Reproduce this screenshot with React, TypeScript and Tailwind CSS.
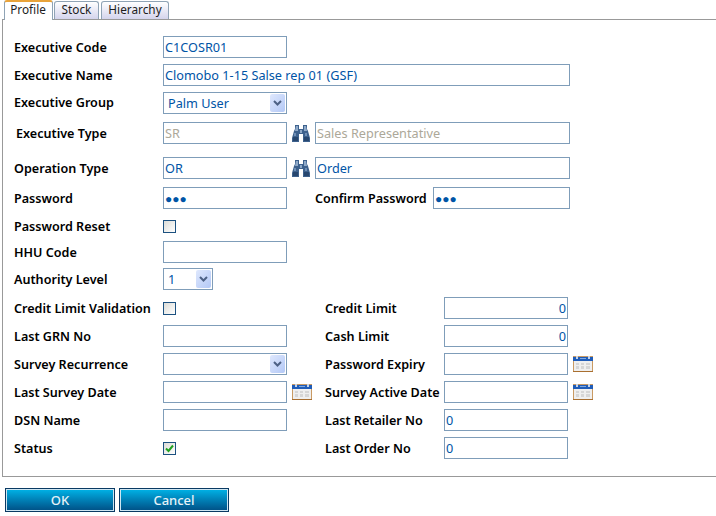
import type { ReactNode } from 'react'

const labelClass = 'pt-[2px] text-[12.6px] font-semibold text-black whitespace-nowrap'
const boxClass = 'h-[22px] border border-[#7f9db9] bg-white px-[1px] text-[12.7px] text-[#0054a6] outline-none'

function Binoculars() {
  return (
    <svg width="18" height="17" viewBox="0 0 18 17" className="shrink-0">
      <path d="M3 0h4v4h4V0h4v4l1 2 2 7v4h-7V9H7v8H0v-4l2-7 1-2z" fill="#3d618d" />
      <path d="M4 1h2v5H3zM12 1h2l1 5h-3zM8 5h2v3H8z" fill="#8fa9c8" />
      <path d="M1 12h5v4H1zM12 12h5v4h-5z" fill="#27476f" />
      <path d="M2 8h2v3H2zM13 8h2v3h-2z" fill="#6f8fb6" />
    </svg>
  )
}

function CalendarIcon() {
  return (
    <svg width="20" height="16" viewBox="0 0 20 16" className="shrink-0">
      <rect x="0" y="0" width="20" height="16" fill="#c99a63" />
      <rect x="0" y="15" width="20" height="1" fill="#a96f30" />
      <rect x="1" y="5" width="18" height="10" fill="#efefef" />
      <rect x="0" y="1" width="20" height="4" fill="#1f5cb8" />
      <rect x="7" y="2" width="6" height="1" fill="#7fa8e0" />
      <rect x="3" y="0" width="2" height="3" fill="#c8d4e6" />
      <rect x="15" y="0" width="2" height="3" fill="#c8d4e6" />
      <path d="M3 7h3v2H3zM8 7h3v2H8zM13 7h4v2h-4zM3 10h3v3H3zM8 10h3v3H8zM13 10h4v3h-4z" fill="#d6d6d6" />
    </svg>
  )
}

function Input({ value = '', className = 'w-[124px]', right = false, muted = false }: {
  value?: string; className?: string; right?: boolean; muted?: boolean
}) {
  return (
    <input readOnly type="text" value={value}
      className={`${boxClass} ${className} ${right ? 'text-right' : ''} ${muted ? 'text-[#aca899]' : ''}`} />
  )
}

// drawn as dots so they come out the size of the original's
function Password({ className }: { className: string }) {
  return <input readOnly type="text" value="●●●" className={`${boxClass} ${className} !text-[12px]`} />
}

function Select({ value = '', className }: { value?: string; className: string }) {
  return (
    <div className={`${boxClass} ${className} flex items-center justify-between pl-[4px] pr-[1px]`}>
      <span className="pt-[2px]">{value}</span>
      <span className="flex h-[18px] w-[15px] items-center justify-center rounded-[2px] bg-gradient-to-br from-[#dfe8fd] to-[#b3c8f6]">
        <svg width="9" height="6" viewBox="0 0 9 6"><path d="M1 1l3.5 3.5L8 1" fill="none" stroke="#4d6185" strokeWidth="2" /></svg>
      </span>
    </div>
  )
}

function Check({ checked = false }: { checked?: boolean }) {
  return (
    <span className="flex h-[13px] w-[13px] items-center justify-center border border-[#1c5180] bg-gradient-to-br from-[#dcdcd7] to-white">
      {checked && <svg width="9" height="9" viewBox="0 0 9 9"><path d="M1 4.5l2.5 2.5L8 1.5" fill="none" stroke="#21a121" strokeWidth="2" /></svg>}
    </span>
  )
}

function Row({ height, label, children, width = 'w-[149px]' }: { height: string; label: string; children?: ReactNode; width?: string }) {
  return (
    <div className={`flex items-center ${height}`}>
      <div className={`${labelClass} ${width}`}>{label}</div>
      {children}
    </div>
  )
}

// lower half of the form: two columns
function Pair({ label, left, rightLabel, right }: { label: string; left: ReactNode; rightLabel: string; right: ReactNode }) {
  return (
    <div className="flex h-[28px] items-center">
      <div className={`${labelClass} w-[149px]`}>{label}</div>
      <div className="flex w-[162px] items-center gap-[5px]">{left}</div>
      <div className={`${labelClass} w-[119px]`}>{rightLabel}</div>
      <div className="flex items-center gap-[5px]">{right}</div>
    </div>
  )
}

export default function App() {
  return (
    <div className="h-[516px] w-[716px] overflow-hidden bg-white font-['Noto_Sans',sans-serif]">
      <div className="relative z-10 flex h-[19px] items-end gap-[1px] pl-[4px] text-[11.8px] text-[#1d1d1d]">
        <div className="-mb-[1px] flex h-[20px] w-[49px] items-center justify-center rounded-t-[3px] border-x border-[#8fa3b5] border-t-2 border-t-[#e8a33a] bg-white pb-[2px] pr-[1px]">Profile</div>
        <div className="flex h-[18px] w-[45px] items-center justify-center rounded-t-[3px] border border-b-0 border-[#8fa3b5] bg-gradient-to-b from-white to-[#d4d4ec] pb-[1px]">Stock</div>
        <div className="ml-[1px] flex h-[18px] w-[68px] items-center justify-center rounded-t-[3px] border border-b-0 border-[#8fa3b5] bg-gradient-to-b from-white to-[#d4d4ec] pb-[1px]">Hierarchy</div>
      </div>
      <div className="ml-[2px] h-[458px] border border-r-0 border-[#999] pl-[11px] pt-[13px]">
        <Row height="h-[28px]" label="Executive Code"><Input value="C1COSR01" /></Row>
        <Row height="h-[28px]" label="Executive Name"><Input value="Clomobo 1-15 Salse rep 01 (GSF)" className="w-[407px]" /></Row>
        <Row height="h-[27px]" label="Executive Group" width="w-[149px] !pt-[1px]"><Select value="Palm User" className="w-[124px]" /></Row>
        <Row height="h-[34px]" label="Executive Type" width="w-[147px] ml-[2px]">
          <Input value="SR" muted />
          <span className="mx-[5px] flex"><Binoculars /></span>
          <Input value="Sales Representative" muted className="w-[255px]" />
        </Row>
        <Row height="h-[36px]" label="Operation Type">
          <Input value="OR" />
          <span className="mx-[5px] flex"><Binoculars /></span>
          <Input value="Order" className="w-[255px]" />
        </Row>
        <Row height="h-[24px]" label="Password">
          <Password className="w-[124px]" />
          <div className={`${labelClass} ml-[28px] w-[118px]`}>Confirm Password</div>
          <Password className="w-[137px]" />
        </Row>
        <Row height="h-[30px] pt-[2px]" label="Password Reset"><Check /></Row>
        <Row height="h-[24px]" label="HHU Code"><Input /></Row>
        <Row height="h-[29px] pt-[1px]" label="Authority Level"><Select value="1" className="w-[50px]" /></Row>
        <div className="h-[1px]" />
        <Pair label="Credit Limit Validation" left={<Check />} rightLabel="Credit Limit" right={<Input value="0" right />} />
        <Pair label="Last GRN No" left={<Input />} rightLabel="Cash Limit" right={<Input value="0" right />} />
        <Pair label="Survey Recurrence" left={<Select className="w-[124px]" />} rightLabel="Password Expiry" right={<><Input /><CalendarIcon /></>} />
        <Pair label="Last Survey Date" left={<><Input /><CalendarIcon /></>} rightLabel="Survey Active Date" right={<><Input /><CalendarIcon /></>} />
        <Pair label="DSN Name" left={<Input />} rightLabel="Last Retailer No" right={<Input value="0" />} />
        <Pair label="Status" left={<Check checked />} rightLabel="Last Order No" right={<Input value="0" />} />
      </div>
      <div className="flex gap-[4px] pl-[5px] pt-[11px]">
        {['OK', 'Cancel'].map(t => (
          <button key={t} className="h-[24px] w-[110px] border border-[#0a3a63] bg-gradient-to-b from-[#00b4e8] to-[#004f85] pt-[1px] text-[13px] font-medium text-[#e6f2f8] shadow-[inset_0_0_0_1px_#cfe6f2]">{t}</button>
        ))}
      </div>
    </div>
  )
}
